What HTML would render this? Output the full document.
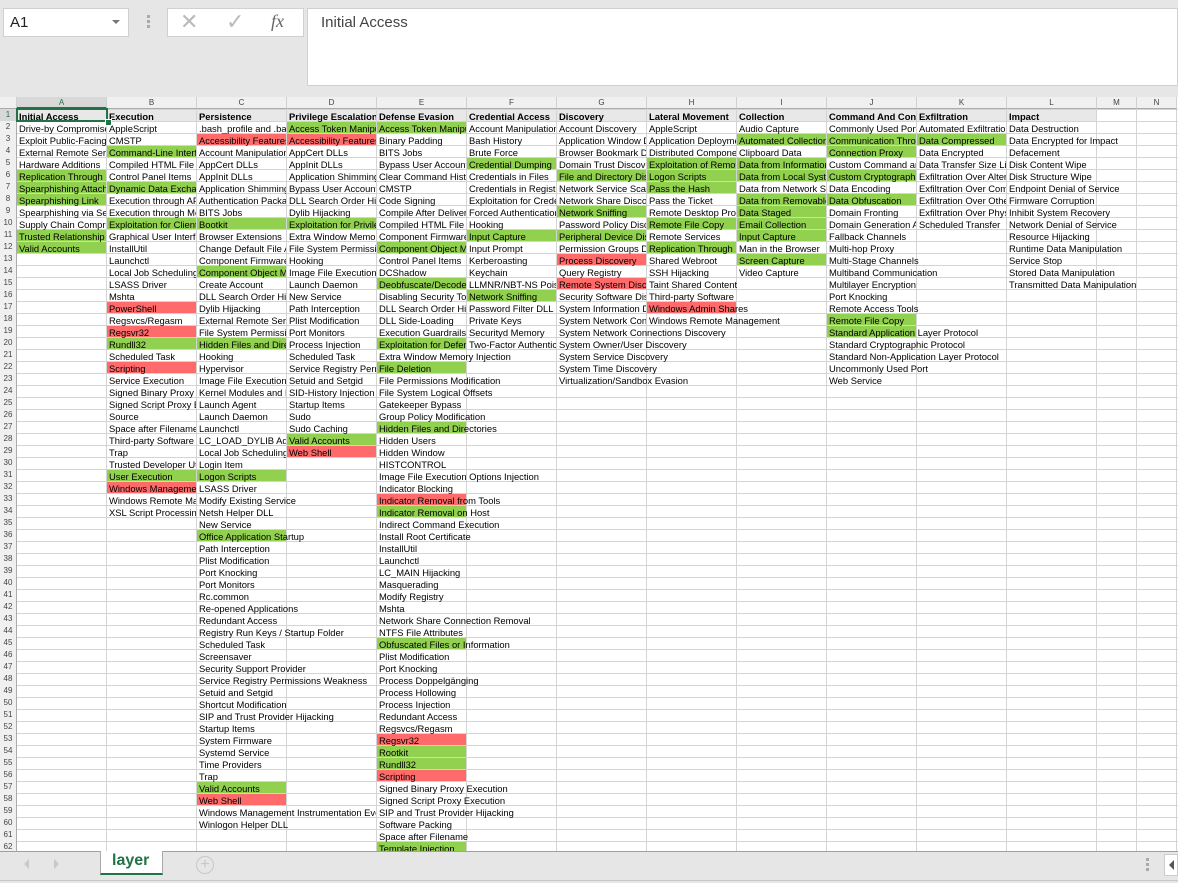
<!DOCTYPE html>
<html><head><meta charset="utf-8">
<style>
body{margin:0;width:1178px;height:883px;overflow:hidden;background:#e6e6e6;font-family:"Liberation Sans",Arial,sans-serif;position:relative}
.abs{position:absolute}
#grid{position:absolute;left:0;top:97px;width:1178px;height:754px;background:#fff;overflow:hidden}
.c{position:absolute;height:12px;font-size:9.4px;line-height:13px;white-space:nowrap;overflow:hidden;color:#000;padding-left:2px;box-sizing:border-box}
.bg{position:absolute;height:11px}
.vl{position:absolute;top:0;width:1px;height:754px;background:#d4d4d4}
.hl{position:absolute;left:0;height:1px;width:1178px;background:#d4d4d4}
.rn{position:absolute;left:0;width:17px;height:12px;font-size:8px;line-height:12px;text-align:center;color:#444;background:#f0f0f0;border-right:1px solid #ababab;box-sizing:border-box}
.ch{position:absolute;top:0;height:12px;font-size:8px;line-height:12px;text-align:center;color:#444;background:#f0f0f0;border-right:1px solid #d0d0d0;border-bottom:1px solid #ababab;box-sizing:border-box}
</style></head><body>
<div class="abs" style="left:3px;top:8px;width:126px;height:29px;background:#fff;border:1px solid #d0d0d0;box-sizing:border-box"></div>
<div class="abs" style="left:10px;top:14px;font-size:15px;color:#222">A1</div>
<div class="abs" style="left:112px;top:20px;width:0;height:0;border-left:4px solid transparent;border-right:4px solid transparent;border-top:4px solid #777"></div>
<div class="abs" style="left:147px;top:15px;width:3px;height:3px;background:#aaa;box-shadow:0 5px 0 #aaa,0 10px 0 #aaa"></div>
<div class="abs" style="left:167px;top:8px;width:137px;height:29px;background:#fff;border:1px solid #d0d0d0;box-sizing:border-box"></div>
<div class="abs" style="left:180px;top:9px;font-size:22px;color:#bbb">✕</div>
<div class="abs" style="left:226px;top:9px;font-size:22px;color:#bbb">✓</div>
<div class="abs" style="left:271px;top:11px;font-size:18px;color:#666;font-style:italic;font-family:'Liberation Serif',serif">fx</div>
<div class="abs" style="left:307px;top:8px;width:871px;height:78px;background:#fff;border:1px solid #d0d0d0;box-sizing:border-box"></div>
<div class="abs" style="left:321px;top:14px;font-size:15px;color:#444">Initial Access</div>
<div id="grid"></div>
<div class="abs" style="left:0;top:851px;width:1178px;height:1px;background:#a0a0a0"></div>
<div class="abs" style="left:24px;top:859px;width:0;height:0;border-top:5px solid transparent;border-bottom:5px solid transparent;border-right:5px solid #c8c8c8"></div>
<div class="abs" style="left:54px;top:859px;width:0;height:0;border-top:5px solid transparent;border-bottom:5px solid transparent;border-left:5px solid #c8c8c8"></div>
<div class="abs" style="left:100px;top:851px;width:63px;height:24px;background:#fff;border-left:1px solid #aaa;border-right:1px solid #aaa;border-bottom:2px solid #217346;box-sizing:border-box"></div>
<div class="abs" style="left:112px;top:852px;font-size:16px;font-weight:bold;color:#217346">layer</div>
<div class="abs" style="left:196px;top:856px;width:18px;height:18px;border:1px solid #c8c8c8;border-radius:50%;box-sizing:border-box;color:#c8c8c8;font-size:16px;line-height:15px;text-align:center">+</div>
<div class="abs" style="left:1146px;top:858px;width:3px;height:3px;background:#aaa;box-shadow:0 5px 0 #aaa,0 10px 0 #aaa"></div>
<div class="abs" style="left:1164px;top:854px;width:14px;height:22px;background:#fff;border:1px solid #ccc;box-sizing:border-box"></div>
<div class="abs" style="left:1169px;top:860px;width:0;height:0;border-top:5px solid transparent;border-bottom:5px solid transparent;border-right:5px solid #555"></div>
<div class="abs" style="left:0;top:880px;width:1178px;height:1px;background:#c8c8c8"></div>
<script>
var cols=[17,107,197,287,377,467,557,647,737,827,917,1007,1097,1137,1177];
var L="ABCDEFGHIJKLMN";
var data=[
["Initial Access","Drive-by Compromise","Exploit Public-Facing Application","External Remote Services","Hardware Additions","Replication Through Removable Media|g","Spearphishing Attachment|g","Spearphishing Link|g","Spearphishing via Service","Supply Chain Compromise","Trusted Relationship|g","Valid Accounts|g"],
["Execution","AppleScript","CMSTP","Command-Line Interface|g","Compiled HTML File","Control Panel Items","Dynamic Data Exchange|g","Execution through API","Execution through Module Load","Exploitation for Client Execution|g","Graphical User Interface","InstallUtil","Launchctl","Local Job Scheduling","LSASS Driver","Mshta","PowerShell|r","Regsvcs/Regasm","Regsvr32|r","Rundll32|g","Scheduled Task","Scripting|r","Service Execution","Signed Binary Proxy Execution","Signed Script Proxy Execution","Source","Space after Filename","Third-party Software","Trap","Trusted Developer Utilities","User Execution|g","Windows Management Instrumentation|r","Windows Remote Management","XSL Script Processing"],
["Persistence",".bash_profile and .bashrc","Accessibility Features|r","Account Manipulation","AppCert DLLs","AppInit DLLs","Application Shimming","Authentication Package","BITS Jobs","Bootkit|g","Browser Extensions","Change Default File Association","Component Firmware","Component Object Model Hijacking|g","Create Account","DLL Search Order Hijacking","Dylib Hijacking","External Remote Services","File System Permissions Weakness","Hidden Files and Directories|g","Hooking","Hypervisor","Image File Execution Options Injection","Kernel Modules and Extensions","Launch Agent","Launch Daemon","Launchctl","LC_LOAD_DYLIB Addition","Local Job Scheduling","Login Item","Logon Scripts|g","LSASS Driver","Modify Existing Service","Netsh Helper DLL","New Service","Office Application Startup|g","Path Interception","Plist Modification","Port Knocking","Port Monitors","Rc.common","Re-opened Applications","Redundant Access","Registry Run Keys / Startup Folder","Scheduled Task","Screensaver","Security Support Provider","Service Registry Permissions Weakness","Setuid and Setgid","Shortcut Modification","SIP and Trust Provider Hijacking","Startup Items","System Firmware","Systemd Service","Time Providers","Trap","Valid Accounts|g","Web Shell|r","Windows Management Instrumentation Event Subscription","Winlogon Helper DLL"],
["Privilege Escalation","Access Token Manipulation|g","Accessibility Features|r","AppCert DLLs","AppInit DLLs","Application Shimming","Bypass User Account Control","DLL Search Order Hijacking","Dylib Hijacking","Exploitation for Privilege Escalation|g","Extra Window Memory Injection","File System Permissions Weakness","Hooking","Image File Execution Options Injection","Launch Daemon","New Service","Path Interception","Plist Modification","Port Monitors","Process Injection","Scheduled Task","Service Registry Permissions Weakness","Setuid and Setgid","SID-History Injection","Startup Items","Sudo","Sudo Caching","Valid Accounts|g","Web Shell|r"],
["Defense Evasion","Access Token Manipulation|g","Binary Padding","BITS Jobs","Bypass User Account Control","Clear Command History","CMSTP","Code Signing","Compile After Delivery","Compiled HTML File","Component Firmware","Component Object Model Hijacking|g","Control Panel Items","DCShadow","Deobfuscate/Decode Files or Information|g","Disabling Security Tools","DLL Search Order Hijacking","DLL Side-Loading","Execution Guardrails","Exploitation for Defense Evasion|g","Extra Window Memory Injection","File Deletion|g","File Permissions Modification","File System Logical Offsets","Gatekeeper Bypass","Group Policy Modification","Hidden Files and Directories|g","Hidden Users","Hidden Window","HISTCONTROL","Image File Execution Options Injection","Indicator Blocking","Indicator Removal from Tools|r","Indicator Removal on Host|g","Indirect Command Execution","Install Root Certificate","InstallUtil","Launchctl","LC_MAIN Hijacking","Masquerading","Modify Registry","Mshta","Network Share Connection Removal","NTFS File Attributes","Obfuscated Files or Information|g","Plist Modification","Port Knocking","Process Doppelgänging","Process Hollowing","Process Injection","Redundant Access","Regsvcs/Regasm","Regsvr32|r","Rootkit|g","Rundll32|g","Scripting|r","Signed Binary Proxy Execution","Signed Script Proxy Execution","SIP and Trust Provider Hijacking","Software Packing","Space after Filename","Template Injection|g"],
["Credential Access","Account Manipulation","Bash History","Brute Force","Credential Dumping|g","Credentials in Files","Credentials in Registry","Exploitation for Credential Access","Forced Authentication","Hooking","Input Capture|g","Input Prompt","Kerberoasting","Keychain","LLMNR/NBT-NS Poisoning and Relay","Network Sniffing|g","Password Filter DLL","Private Keys","Securityd Memory","Two-Factor Authentication Interception"],
["Discovery","Account Discovery","Application Window Discovery","Browser Bookmark Discovery","Domain Trust Discovery","File and Directory Discovery|g","Network Service Scanning","Network Share Discovery","Network Sniffing|g","Password Policy Discovery","Peripheral Device Discovery|g","Permission Groups Discovery","Process Discovery|r","Query Registry","Remote System Discovery|r","Security Software Discovery","System Information Discovery","System Network Configuration Discovery","System Network Connections Discovery","System Owner/User Discovery","System Service Discovery","System Time Discovery","Virtualization/Sandbox Evasion"],
["Lateral Movement","AppleScript","Application Deployment Software","Distributed Component Object Model","Exploitation of Remote Services|g","Logon Scripts|g","Pass the Hash|g","Pass the Ticket","Remote Desktop Protocol","Remote File Copy|g","Remote Services","Replication Through Removable Media|g","Shared Webroot","SSH Hijacking","Taint Shared Content","Third-party Software","Windows Admin Shares|r","Windows Remote Management"],
["Collection","Audio Capture","Automated Collection|g","Clipboard Data","Data from Information Repositories|g","Data from Local System|g","Data from Network Shared Drive","Data from Removable Media|g","Data Staged|g","Email Collection|g","Input Capture|g","Man in the Browser","Screen Capture|g","Video Capture"],
["Command And Control","Commonly Used Port","Communication Through Removable Media|g","Connection Proxy|g","Custom Command and Control Protocol","Custom Cryptographic Protocol|g","Data Encoding","Data Obfuscation|g","Domain Fronting","Domain Generation Algorithms","Fallback Channels","Multi-hop Proxy","Multi-Stage Channels","Multiband Communication","Multilayer Encryption","Port Knocking","Remote Access Tools","Remote File Copy|g","Standard Application Layer Protocol|g","Standard Cryptographic Protocol","Standard Non-Application Layer Protocol","Uncommonly Used Port","Web Service"],
["Exfiltration","Automated Exfiltration","Data Compressed|g","Data Encrypted","Data Transfer Size Limits","Exfiltration Over Alternative Protocol","Exfiltration Over Command and Control Channel","Exfiltration Over Other Network Medium","Exfiltration Over Physical Medium","Scheduled Transfer"],
["Impact","Data Destruction","Data Encrypted for Impact","Defacement","Disk Content Wipe","Disk Structure Wipe","Endpoint Denial of Service","Firmware Corruption","Inhibit System Recovery","Network Denial of Service","Resource Hijacking","Runtime Data Manipulation","Service Stop","Stored Data Manipulation","Transmitted Data Manipulation"]
];
var g=document.getElementById('grid'),h='';
var T0=13,RH=12,NR=62;
h+='<div class="bg" style="left:17px;top:'+T0+'px;width:1080px;height:12px;background:#e8e8e8"></div>';
for(var c=0;c<14;c++){var x=cols[c+1];h+='<div class="vl" style="left:'+(x-1)+'px"></div>';}
for(var r=0;r<=NR;r++){h+='<div class="hl" style="top:'+(T0+r*RH-1)+'px"></div>';}
function cell(c,r){var v=data[c]&&data[c][r];return v||null;}
for(var c=0;c<12;c++){for(var r=0;r<data[c].length;r++){var v=data[c][r];var p=v.split('|');var t=p[0],col=p[1];
var x=cols[c],y=T0+r*RH;
if(col){h+='<div class="bg" style="left:'+x+'px;top:'+y+'px;width:'+(cols[c+1]-x-1)+'px;background:'+(col=='g'?'#92d050':'#ff6b6b')+'"></div>';}
var e=c+1;while(e<14&&!cell(e,r))e++;var w=cols[e]-x-1;
h+='<div class="c" style="left:'+x+'px;top:'+y+'px;width:'+w+'px;'+(r==0?'font-weight:bold;':'')+'">'+t.replace(/&/g,'&amp;')+'</div>';}}
h+='<div class="ch" style="left:0;width:17px;background:#f0f0f0"></div>';
for(var c=0;c<14;c++){h+='<div class="ch" style="left:'+cols[c]+'px;width:'+(cols[c+1]-cols[c])+'px'+(c==0?';background:#d8d8d8;color:#217346;border-bottom:2px solid #217346':'')+'">'+L[c]+'</div>';}
for(var r=0;r<NR;r++){h+='<div class="rn" style="top:'+(T0+r*RH-1)+'px;'+(r==0?'background:#d8d8d8;color:#217346;':'')+'">'+(r+1)+'</div>';}
h+='<div class="abs" style="left:16px;top:'+(T0-2)+'px;width:92px;height:14px;border:2px solid #217346;box-sizing:border-box"></div>';
h+='<div class="abs" style="left:105px;top:'+(T0+9)+'px;width:5px;height:5px;background:#217346;border:1px solid #fff"></div>';
g.innerHTML=h;
</script>
</body></html>
